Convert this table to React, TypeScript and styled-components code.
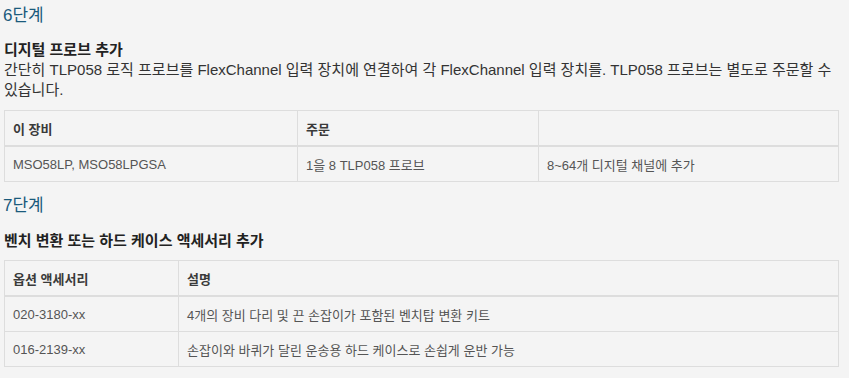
import styled, { createGlobalStyle } from "styled-components";

const GlobalStyle = createGlobalStyle`
  body {
    margin: 0;
    background: #f4f4f4;
    font-family: "Liberation Sans", Arial, "Noto Sans CJK KR", sans-serif;
    color: #333;
  }
`;

interface Column {
  title: string;
  width?: number;
}

const devices: { columns: Column[]; rows: string[][] } = {
  columns: [{ title: "이 장비", width: 293 }, { title: "주문", width: 241 }, { title: "" }],
  rows: [["MSO58LP, MSO58LPGSA", "1을 8 TLP058 프로브", "8~64개 디지털 채널에 추가"]],
};

const accessories: { columns: Column[]; rows: string[][] } = {
  columns: [{ title: "옵션 액세서리", width: 174 }, { title: "설명" }],
  rows: [
    ["020-3180-xx", "4개의 장비 다리 및 끈 손잡이가 포함된 벤치탑 변환 키트"],
    ["016-2139-xx", "손잡이와 바퀴가 달린 운송용 하드 케이스로 손쉽게 운반 가능"],
  ],
};

function SpecTable({ columns, rows }: { columns: Column[]; rows: string[][] }) {
  return (
    <Table>
      <colgroup>
        {columns.map((c, i) => (
          <col key={i} style={c.width ? { width: c.width } : undefined} />
        ))}
      </colgroup>
      <thead>
        <tr>
          {columns.map((c, i) => (
            <Th key={i}>{c.title}</Th>
          ))}
        </tr>
      </thead>
      <tbody>
        {rows.map((r, i) => (
          <tr key={i}>
            {r.map((cell, j) => (
              <Td key={j}>{cell}</Td>
            ))}
          </tr>
        ))}
      </tbody>
    </Table>
  );
}

function App() {
  return (
    <>
      <GlobalStyle />
      <Page>
        <StepTitle>6단계</StepTitle>
        <SubTitle>디지털 프로브 추가</SubTitle>
        <Text>
          간단히 TLP058 로직 프로브를 FlexChannel 입력 장치에 연결하여 각 FlexChannel 입력
          장치를. TLP058 프로브는 별도로 주문할 수 있습니다.
        </Text>
        <SpecTable {...devices} />

        <StepTitle $gap={8}>7단계</StepTitle>
        <SubTitle $gap={9}>벤치 변환 또는 하드 케이스 액세서리 추가</SubTitle>
        <TableGap />
        <SpecTable {...accessories} />
      </Page>
    </>
  );
}

const Page = styled.div`
  padding: 0 10px 12px 4px;
`;

const StepTitle = styled.h3<{ $gap?: number }>`
  margin: ${({ $gap }) => $gap ?? 0}px 0 0 -1px;
  font-size: 17px;
  font-weight: normal;
  line-height: 32px;
  color: #1a5a7c;
`;

const SubTitle = styled.h4<{ $gap?: number }>`
  margin: ${({ $gap }) => $gap ?? 8}px 0 0 0;
  font-size: 15px;
  font-weight: bold;
  line-height: 20px;
  color: #222;
`;

const Text = styled.p`
  margin: 0 0 10px 0;
  font-size: 15px;
  line-height: 20px;
  color: #333;
`;

const TableGap = styled.div`
  height: 9px;
`;

const Table = styled.table`
  width: 100%;
  border-collapse: collapse;
  table-layout: fixed;
  border: 1px solid #ddd;
  font-size: 13px;
`;

const Th = styled.th`
  height: 34px;
  padding: 0 8px;
  text-align: left;
  font-weight: bold;
  color: #3a3a3a;
  border: 1px solid #ddd;
  border-bottom: 2px solid #ddd;
`;

const Td = styled.td`
  height: 34px;
  padding: 0 8px;
  color: #555;
  border: 1px solid #ddd;
`;

export default App;
